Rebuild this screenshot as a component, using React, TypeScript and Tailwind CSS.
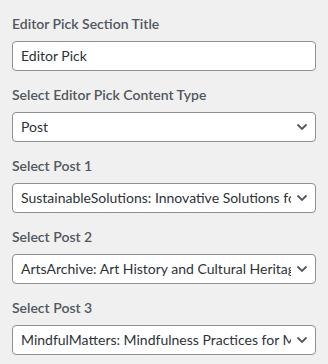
import React from 'react';

const font = { fontFamily: 'Lato, "Noto Sans", sans-serif' };

const posts = [
  'SustainableSolutions: Innovative Solutions for a Greener Planet',
  'ArtsArchive: Art History and Cultural Heritage',
  'MindfulMatters: Mindfulness Practices for Modern Life',
];

const Chevron = () => (
  <svg
    className="pointer-events-none absolute right-[7px] top-1/2 -translate-y-1/2"
    width="12"
    height="8"
    viewBox="0 0 12 8"
    fill="none"
  >
    <path d="M1.5 1.5 L6 6 L10.5 1.5" stroke="#50575e" strokeWidth="1.8" />
  </svg>
);

const Field = ({ label, children }: { label: string; children: React.ReactNode }) => (
  <div className="flex flex-col">
    <label className="mb-[7px] text-[14px] leading-5 font-semibold text-[#50575e]">{label}</label>
    {children}
  </div>
);

const Select = ({ value }: { value: string }) => (
  <div className="relative flex h-[30px] rounded border border-[#8c8f94] bg-white pl-2 pr-6">
    <div className="min-w-0 flex-1 overflow-hidden whitespace-nowrap text-[14px] leading-[28px] text-[#2c3338]">
      {value}
    </div>
    <Chevron />
  </div>
);

export default function App() {
  return (
    <div className="min-h-[364px] w-[328px] bg-[#f0f0f0] px-3 pt-[14px]" style={font}>
      <div className="flex flex-col gap-[14px]">
        <Field label="Editor Pick Section Title">
          <div className="h-[30px] rounded border border-[#8c8f94] bg-white pl-2 text-[14px] leading-[28px] text-[#2c3338]">
            Editor Pick
          </div>
        </Field>
        <Field label="Select Editor Pick Content Type">
          <Select value="Post" />
        </Field>
        {posts.map((p, i) => (
          <Field key={p} label={`Select Post ${i + 1}`}>
            <Select value={p} />
          </Field>
        ))}
      </div>
    </div>
  );
}
